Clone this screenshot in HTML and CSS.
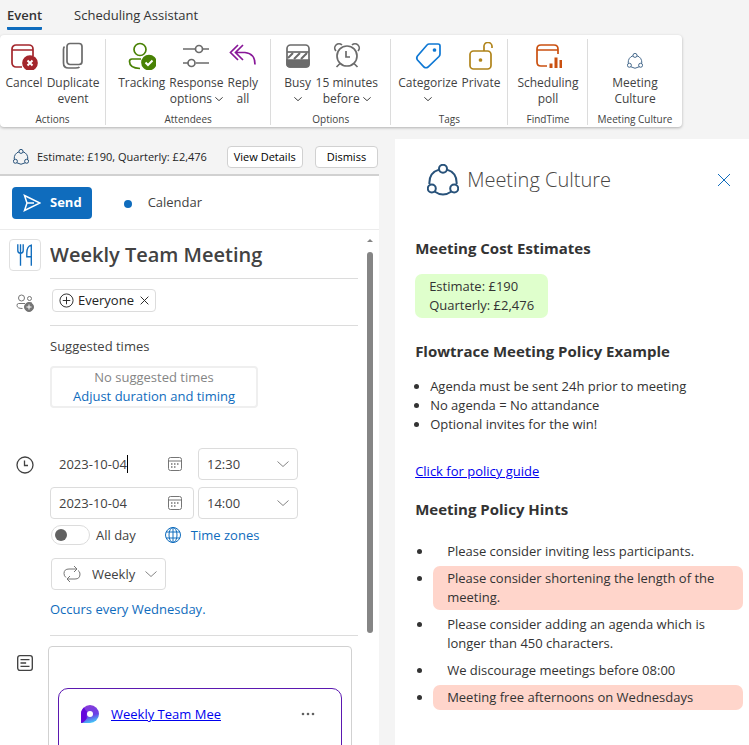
FILE: index.html
```html
<!DOCTYPE html>
<html lang="en">
<head>
  <meta charset="UTF-8">
  <title>Weekly Team Meeting</title>
  <meta name="viewport" content="width=device-width, initial-scale=1">
  <link rel="stylesheet" href="styles.css">
</head>
<body>
  <!-- shared icons -->
  <svg class="sprite" aria-hidden="true">
    <symbol id="culture" viewBox="0 0 32 32">
      <path d="M12 5.6C6 7.4 2 12.500 2.400 20M20 5.600C26 7.400 30 12.500 29.600 20M7.500 27.500Q16 33.500 24.500 27.500"/>
      <circle cx="16" cy="4.800" r="4"/>
      <circle cx="4.800" cy="24.500" r="4"/>
      <circle cx="27.200" cy="24.500" r="4"/>
    </symbol>
    <symbol id="chevron" viewBox="0 0 12 12"><path d="M.5 3.500l5.500 5 5.500-5"/></symbol>
    <symbol id="close" viewBox="0 0 14 14"><path d="M1 1l12 12M13 1L1 13"/></symbol>
    <symbol id="calendar" viewBox="0 0 16 16">
      <rect x="1.500" y="1.500" width="13" height="13" rx="2"/>
      <path d="M1.500 5h13"/>
      <path stroke-width="1.500" d="M7 8h1.500M10 8h1.500M4 8h1.500M4 11h1.500M7 11h1.500"/>
    </symbol>
  </svg>

  <nav class="tabs">
    <a class="tab active" href="#event">Event</a>
    <a class="tab" href="#scheduling">Scheduling Assistant</a>
  </nav>

  <div class="ribbon">
    <section class="group">
      <div class="tools">
        <button class="tool">
          <svg class="icon red" viewBox="0 0 28 28"><path d="M12 25H6a4 4 0 0 1-4-4V7a4 4 0 0 1 4-4h13a4 4 0 0 1 4 4v7M2 8h21"/><circle class="fill" cx="20" cy="21" r="7"/><path class="mark" d="M17.500 18.500l5 5M22.500 18.500l-5 5"/></svg>
          <span>Cancel</span>
        </button>
        <button class="tool">
          <svg class="icon grey" viewBox="0 0 28 28"><rect x="8" y="1.500" width="15" height="21" rx="3"/><path d="M5.500 4.500q-1 1-1 3V21q0 5 5 5h7q3 0 4-1"/></svg>
          <span>Duplicate<br>event</span>
        </button>
      </div>
      <h2 class="group-name">Actions</h2>
    </section>
    <section class="group">
      <div class="tools">
        <button class="tool">
          <svg class="icon green" viewBox="0 0 28 28"><circle cx="12" cy="7.500" r="6"/><path d="M13 17H4q-2.500 0-2.500 2.500Q1.500 26 12 26.500"/><circle class="fill" cx="21" cy="20.500" r="7"/><path class="mark" d="M17.500 20.500l2.500 2.500 4.500-4.500"/></svg>
          <span>Tracking</span>
        </button>
        <button class="tool">
          <svg class="icon grey" viewBox="0 0 28 28"><path d="M1 7h12M21 7h6M1 21h5M14 21h13"/><circle cx="17" cy="7" r="3.500"/><circle cx="9.500" cy="21" r="3.500"/></svg>
          <span>Response<br>options <svg class="arrow"><use href="#chevron"/></svg></span>
        </button>
        <button class="tool">
          <svg class="icon purple" viewBox="0 0 28 28"><path d="M9 3L1.500 10.500 9 18M14 3l-7.500 7.500L14 18M7 10.500h9q10 1 10 12"/></svg>
          <span>Reply<br>all</span>
        </button>
      </div>
      <h2 class="group-name">Attendees</h2>
    </section>
    <section class="group">
      <div class="tools">
        <button class="tool">
          <svg class="icon grey" viewBox="0 0 28 28"><path class="fill" d="M3 18h22v4q0 3-3 3H6q-3 0-3-3z"/><rect x="3" y="3" width="22" height="22" rx="3.500"/><path d="M3 10h22"/><path class="stripe" d="M4 16l5-5M10 17l6-6M17 17l6-6"/></svg>
          <span>Busy<br><svg class="arrow"><use href="#chevron"/></svg></span>
        </button>
        <button class="tool">
          <svg class="icon grey" viewBox="0 0 28 28"><circle cx="14" cy="14" r="10"/><path d="M13 9v6h4M7 21.500L3.500 25M21 21.500l3.500 3.500M3 9a4 4 0 1 1 6-6M25 9a4 4 0 1 0-6-6"/></svg>
          <span>15 minutes<br>before <svg class="arrow"><use href="#chevron"/></svg></span>
        </button>
      </div>
      <h2 class="group-name">Options</h2>
    </section>
    <section class="group">
      <div class="tools">
        <button class="tool">
          <svg class="icon blue" viewBox="0 0 28 28"><path d="M15 2h9q2 0 2 2v8q0 1.500-1 2.500L14 25q-2 1.500-4 0l-6.500-7q-1.500-2 0-4L13 3q1-1 2-1z"/><circle class="fill" cx="20.500" cy="8" r="1"/></svg>
          <span>Categorize<br><svg class="arrow"><use href="#chevron"/></svg></span>
        </button>
        <button class="tool">
          <svg class="icon gold" viewBox="0 0 28 28"><rect x="3" y="9" width="21" height="18" rx="3.500"/><path d="M17 9V5a4 4 0 0 1 8-1v2"/><circle class="fill" cx="13.500" cy="18" r="1"/></svg>
          <span>Private</span>
        </button>
      </div>
      <h2 class="group-name">Tags</h2>
    </section>
    <section class="group">
      <div class="tools">
        <button class="tool">
          <svg class="icon orange" viewBox="0 0 28 28"><path d="M13 24H7q-4 0-4-4V7q0-4 4-4h13q4 0 4 4v5M3 8h21"/><path class="bars" d="M17 21.500v4.500M22 15.500V26M27 18v8"/></svg>
          <span>Scheduling<br>poll</span>
        </button>
      </div>
      <h2 class="group-name">FindTime</h2>
    </section>
    <section class="group">
      <div class="tools">
        <button class="tool">
          <svg class="icon culture small"><use href="#culture"/></svg>
          <span>Meeting<br>Culture</span>
        </button>
      </div>
      <h2 class="group-name">Meeting Culture</h2>
    </section>
  </div>

  <main class="main">
    <div class="compose">
      <div class="notice">
        <svg class="culture notice-icon"><use href="#culture"/></svg>
        <span class="notice-text">Estimate: £190, Quarterly: £2,476</span>
        <button class="notice-btn">View Details</button>
        <button class="notice-btn">Dismiss</button>
      </div>

      <div class="send-bar">
        <button class="send">
          <svg viewBox="0 0 18 18"><path d="M1.500 1.500L17 9 1.500 16.500 4 9zM4 9h7"/></svg>
          Send
        </button>
        <span class="calendar-dot"></span>
        <span>Calendar</span>
      </div>

      <div class="scroll-area">
        <form class="form">
          <div class="row title-row">
            <button type="button" class="charm" aria-label="Charm">
              <svg viewBox="0 0 20 28"><path d="M2 2v7q0 3 3 3t3-3V2M5 2v24M17 26V3q-5 1-5 9v4h5"/></svg>
            </button>
            <input class="title" type="text" value="Weekly Team Meeting" aria-label="Title">
          </div>

          <div class="row people-row">
            <svg class="row-icon people" viewBox="0 0 18 18"><circle cx="5.500" cy="4" r="3"/><circle cx="13.500" cy="4.500" r="2"/><path d="M9 9.500H2.500Q1 9.500 1 11.500q0 3 5.500 3M12 9h4"/><circle class="fill" cx="13" cy="13" r="4.500"/><path class="mark" d="M10.500 13h5M13 10.500v5"/></svg>
            <div class="people-field">
              <span class="chip">
                <svg class="plus" viewBox="0 0 16 16"><circle cx="8" cy="8" r="7"/><path d="M8 4v8M4 8h8"/></svg>
                Everyone
                <button type="button" class="chip-close" aria-label="Remove Everyone"><svg><use href="#close"/></svg></button>
              </span>
            </div>
          </div>

          <div class="row">
            <div class="field suggested">
              <span>Suggested times</span>
              <div class="suggested-box">
                <span>No suggested times</span>
                <a href="#adjust">Adjust duration and timing</a>
              </div>
            </div>
          </div>

          <div class="row time-row">
            <svg class="row-icon clock" viewBox="0 0 18 18"><circle cx="9" cy="9" r="8"/><path d="M8.500 4.500V9.500H12"/></svg>
            <div class="field times">
              <label class="box date focused">
                <input type="text" value="2023-10-04" aria-label="Start date"><span class="caret"></span>
                <svg class="cal"><use href="#calendar"/></svg>
              </label>
              <label class="box time">
                <select aria-label="Start time"><option>12:30</option></select>
                <svg class="chev"><use href="#chevron"/></svg>
              </label>
              <label class="box date">
                <input type="text" value="2023-10-04" aria-label="End date">
                <svg class="cal"><use href="#calendar"/></svg>
              </label>
              <label class="box time">
                <select aria-label="End time"><option>14:00</option></select>
                <svg class="chev"><use href="#chevron"/></svg>
              </label>
            </div>
          </div>

          <div class="row">
            <div class="field all-day">
              <input class="toggle" type="checkbox" id="allday">
              <label for="allday">All day</label>
              <a class="zones" href="#zones">
                <svg viewBox="0 0 18 18"><circle cx="9" cy="9" r="7.500"/><ellipse cx="9" cy="9" rx="4" ry="7.500"/><path d="M2 6h14M2 12h14M9 1.500v15"/></svg>
                Time zones
              </a>
            </div>
          </div>

          <div class="row repeat-row">
            <div class="field">
              <label class="box repeat">
                <svg class="loop" viewBox="0 0 18 18"><path d="M3 12.500Q1 11 1 8.500 1 4 6 4h8M11 1l3 3-3 3M15 5.500q2 1 2 3.500 0 5-5 5H4M7 11l-3 3 3 3"/></svg>
                <select aria-label="Repeat"><option>Weekly</option></select>
                <svg class="chev"><use href="#chevron"/></svg>
              </label>
              <a class="occurs" href="#series">Occurs every Wednesday.</a>
            </div>
          </div>
          <hr class="divider">

          <div class="row">
            <svg class="row-icon note" viewBox="0 0 16 16"><rect x="1.500" y="1.500" width="13" height="13" rx="2"/><path d="M4 5h8M4 8h5M4 11h8"/></svg>
            <div class="editor">
              <div class="loop-card">
                <svg class="loop-logo" viewBox="0 0 18 18">
                  <defs>
                    <linearGradient id="loopfill" x1="0.300" y1="0" x2="0.600" y2="1">
                      <stop offset="0" stop-color="#8a3bd8"/>
                      <stop offset=".6" stop-color="#6a3fe6"/>
                      <stop offset="1" stop-color="#42d0f8"/>
                    </linearGradient>
                  </defs>
                  <path fill="url(#loopfill)" d="M0 18V9a9 9 0 1 1 9 9z"/>
                  <path fill="#6407dc" d="M0 18V9q0-4 3-6.500Q4 5 6 6.500 5 12 6 13 3 18 0 18z"/>
                  <circle fill="#fff" cx="9" cy="9" r="3"/>
                </svg>
                <a href="#component">Weekly Team Mee</a>
                <button type="button" class="more" aria-label="More options"><svg viewBox="0 0 14 4"><circle cx="2" cy="2" r="1.300"/><circle cx="7" cy="2" r="1.300"/><circle cx="12" cy="2" r="1.300"/></svg></button>
              </div>
            </div>
          </div>
        </form>
        <div class="scrollbar"><span class="scroll-up"></span><span class="thumb"></span></div>
      </div>
    </div>

    <aside class="pane">
      <header class="pane-head">
        <svg class="culture pane-logo"><use href="#culture"/></svg>
        <h1>Meeting Culture</h1>
        <button class="pane-close" aria-label="Close"><svg><use href="#close"/></svg></button>
      </header>

      <h2>Meeting Cost Estimates</h2>
      <p class="cost">Estimate: £190<br>Quarterly: £2,476</p>

      <h2>Flowtrace Meeting Policy Example</h2>
      <ul class="policy">
        <li>Agenda must be sent 24h prior to meeting</li>
        <li>No agenda = No attandance</li>
        <li>Optional invites for the win!</li>
      </ul>
      <a class="guide" href="#guide">Click for policy guide</a>

      <h2>Meeting Policy Hints</h2>
      <ul class="hints">
        <li>Please consider inviting less participants.</li>
        <li class="warn">Please consider shortening the length of the meeting.</li>
        <li>Please consider adding an agenda which is longer than 450 characters.</li>
        <li>We discourage meetings before 08:00</li>
        <li class="warn">Meeting free afternoons on Wednesdays</li>
      </ul>
    </aside>
  </main>
</body>
</html>
```

FILE: styles.css
```css
* {
  box-sizing: border-box;
}
body {
  display: flex;
  flex-direction: column;
  height: 100vh;
  margin: 0;
  overflow: hidden;
  background: #f4f4f4;
  color: #424242;
  font: 13px/19px "Open Sans", "Noto Sans", sans-serif;
}
button, input, select {
  font: inherit;
  color: inherit;
  margin: 0;
  padding: 0;
  border: 0;
  background: none;
}
button, select {
  cursor: pointer;
}
h1, h2, p, ul {
  margin: 0;
  padding: 0;
}
svg {
  display: block;
  flex: none;
  fill: none;
  stroke: currentColor;
}
a {
  color: #0f6cbd;
  text-decoration: none;
}
.sprite {
  position: absolute;
  width: 0;
  height: 0;
}
.culture {
  color: #28527a;
  stroke-width: 2;
}

/* tabs */
.tabs {
  display: flex;
  gap: 32px;
  padding: 6px 7px 5px;
}
.tab {
  height: 24px;
  color: #333;
}
.tab.active {
  font-weight: 600;
  border-bottom: 3px solid #0f6cbd;
  border-radius: 1px;
}

/* ribbon */
.ribbon {
  display: grid;
  grid-template-columns: 106fr 165fr 120fr 117fr 80fr 93fr;
  width: 91%;
  margin-bottom: 12px;
  padding: 4px 0 1px;
  background: #fff;
  border-radius: 4px;
  box-shadow: 0 1px 3px rgba(0, 0, 0, .28);
}
.group {
  display: flex;
  flex-direction: column;
  min-width: 0;
  margin-bottom: 1px;
  border-right: 1px solid #dcdcdc;
}
.group:last-child {
  border-right: 0;
}
.tools {
  display: flex;
  justify-content: center;
  gap: 4px;
  height: 74px;
}
.tool {
  display: flex;
  flex-direction: column;
  align-items: center;
  gap: 5px;
  padding-top: 3px;
  font-size: 12px;
  line-height: 16px;
  white-space: nowrap;
}
.icon {
  width: 28px;
  height: 28px;
  stroke-width: 1.700;
}
.icon.small {
  padding: 11px 6px 1px;
}
.icon .fill {
  fill: currentColor;
}
.icon .mark {
  stroke: #fff;
  stroke-width: 2;
}
.icon .stripe {
  stroke-width: 2;
}
.icon .bars {
  stroke-width: 3;
}
.red { color: #a4262c; }
.grey { color: #6b6b6b; }
.green { color: #498205; }
.purple { color: #881798; }
.blue { color: #0f78d4; }
.gold { color: #b0841a; }
.orange { color: #ca5010; }
.arrow {
  display: inline-block;
  width: 8px;
  height: 8px;
  stroke-width: 1.500;
}
.group-name {
  font-size: 10px;
  font-weight: 400;
  line-height: 12px;
  text-align: center;
  white-space: nowrap;
}

/* columns */
.main {
  display: grid;
  grid-template-columns: 15fr 14fr;
  gap: 16px;
  flex: 1;
  min-height: 0;
}
.compose {
  display: flex;
  flex-direction: column;
  min-width: 0;
  min-height: 0;
  background: #fff;
}

.notice {
  display: flex;
  align-items: center;
  height: 37px;
  padding: 0 1px 0 13px;
  background: #f4f4f4;
  border-bottom: 2px solid #d1d1d1;
  color: #242424;
  font-size: 11px;
}
.notice-icon {
  width: 16px;
  height: 16px;
}
.notice-text {
  flex: 1;
  margin-left: 8px;
  white-space: nowrap;
}
.notice-btn {
  height: 22px;
  margin-left: 12px;
  padding: 0 6px;
  border: 1px solid #d1d1d1;
  border-radius: 4px;
  background: #fff;
  color: #000;
  line-height: 20px;
  white-space: nowrap;
}
.notice-btn:last-child {
  padding: 0 11px;
}

.send-bar {
  display: flex;
  align-items: center;
  height: 54px;
  padding: 0 12px;
  border-bottom: 1px solid #ececec;
}
.send {
  display: flex;
  align-items: center;
  gap: 9px;
  height: 32px;
  padding: 0 10px 0 11px;
  border-radius: 4px;
  background: #0f6cbd;
  color: #fff;
  font-weight: 700;
}
.send svg {
  width: 18px;
  height: 18px;
  stroke-width: 1.500;
}
.calendar-dot {
  width: 8px;
  height: 8px;
  margin: 2px 16px 0 32px;
  border-radius: 50%;
  background: #0f6cbd;
}

/* event form */
.scroll-area {
  display: flex;
  flex: 1;
  min-height: 0;
  padding-right: 6px;
}
.form {
  flex: 1;
  min-width: 0;
  padding-right: 8px;
  overflow: hidden;
}
.scrollbar {
  display: flex;
  flex-direction: column;
  align-items: center;
  width: 7px;
}
.scroll-up {
  margin: 9px 0 10px;
  border: 3px solid transparent;
  border-top: 0;
  border-bottom-color: #858585;
}
.thumb {
  width: 6px;
  height: 74%;
  border-radius: 3px;
  background: #858585;
}
.row {
  display: flex;
}
.row > .field:first-child {
  margin-left: 50px;
}
.row-icon {
  width: 18px;
  height: 18px;
  margin: 0 16px;
}
.title-row {
  align-items: center;
  height: 49px;
  padding-left: 9px;
}
.charm {
  display: flex;
  align-items: center;
  justify-content: center;
  width: 32px;
  height: 32px;
  border: 1px solid #e0e0e0;
  border-radius: 4px;
  color: #0f6cbd;
}
.charm svg {
  width: 18px;
  height: 26px;
  stroke-width: 1.500;
}
.title {
  flex: 1;
  align-self: stretch;
  min-width: 0;
  margin-left: 9px;
  border-bottom: 1px solid #dcdcdc;
  font-size: 20px;
  font-weight: 600;
}
.people-row {
  align-items: center;
  height: 47px;
}
.people {
  color: #757575;
}
.people .fill {
  fill: currentColor;
}
.people .mark {
  stroke: #fff;
}
.people-field {
  display: flex;
  align-items: center;
  align-self: stretch;
  flex: 1;
  padding: 0 2px 3px;
  border-bottom: 1px solid #dcdcdc;
}
.chip {
  display: flex;
  align-items: center;
  gap: 4px;
  height: 23px;
  padding: 0 6px;
  border: 1px solid #dcdcdc;
  border-radius: 4px;
  color: #242424;
}
.plus {
  width: 15px;
  height: 15px;
}
.chip-close svg {
  width: 9px;
  height: 9px;
  margin-left: 2px;
  stroke-width: 1.500;
}
.suggested {
  padding-top: 11px;
}
.suggested-box {
  display: flex;
  flex-direction: column;
  align-items: center;
  margin-top: 10px;
  padding: 0 21px;
  border: 2px solid #efefef;
  border-radius: 4px;
  color: #858585;
}
.time-row {
  padding-top: 40px;
}
.clock {
  align-self: flex-start;
  margin-top: 8px;
  stroke-width: 1.300;
}
.times {
  display: grid;
  grid-template-columns: 144px 100px;
  gap: 7px 4px;
}
.box {
  display: flex;
  align-items: center;
  height: 32px;
  border: 1px solid #dcdcdc;
  border-radius: 4px;
}
.box input, .box select {
  flex: 1;
  min-width: 0;
  appearance: none;
  outline: 0;
}
.date {
  padding: 0 10px 0 8px;
}
.focused {
  border-color: transparent;
}
.focused input {
  flex: none;
  field-sizing: content;
}
.caret {
  width: 1px;
  height: 18px;
  margin-right: auto;
  background: #000;
}
.cal {
  width: 16px;
  height: 16px;
  color: #757575;
}
.time {
  padding: 0 8px;
}
.chev {
  width: 12px;
  height: 12px;
  color: #858585;
}
.all-day {
  display: flex;
  align-items: center;
  height: 20px;
  margin-top: 6px;
  padding-left: 1px;
}
.toggle {
  display: flex;
  align-items: center;
  width: 39px;
  height: 20px;
  margin-right: 6px;
  padding: 0 3px;
  appearance: none;
  border: 1px solid #dcdcdc;
  border-radius: 10px;
}
.toggle::before {
  content: "";
  width: 12px;
  height: 12px;
  border-radius: 50%;
  background: #616161;
}
.zones {
  display: flex;
  align-items: center;
  gap: 9px;
  margin-left: 28px;
}
.zones svg {
  width: 18px;
  height: 18px;
}
.repeat-row {
  padding-top: 13px;
}
.repeat {
  gap: 11px;
  width: 115px;
  margin-left: 1px;
  padding: 0 8px 0 11px;
}
.repeat .chev {
  margin-left: -8px;
}
.loop {
  width: 18px;
  height: 18px;
  color: #757575;
}
.occurs {
  display: block;
  margin-top: 10px;
}
.divider {
  margin: 16px 0 0 50px;
  border: 0;
  border-top: 1px solid #dcdcdc;
}
.note {
  margin: 18px 14px 0 16px;
  stroke-width: 1.200;
}
.editor {
  flex: 1;
  min-height: 130px;
  margin: 10px 6px 0 0;
  padding: 41px 9px 0;
  border: 1px solid #d1d1d1;
  border-radius: 4px;
}
.loop-card {
  display: flex;
  align-items: flex-start;
  height: 100px;
  padding: 16px 26px 0 22px;
  border: 1px solid #5b18b0;
  border-radius: 10px;
}
.loop-logo {
  width: 18px;
  height: 18px;
  stroke: none;
}
.loop-card a {
  margin: 0 auto 0 12px;
  color: #0000ee;
  text-decoration: underline;
}
.more svg {
  width: 14px;
  height: 4px;
  margin-top: 7px;
  fill: #616161;
  stroke: none;
}

/* add-in pane */
.pane {
  min-width: 0;
  padding: 24px 6px 0 20px;
  background: #fff;
  color: #333;
  overflow: hidden;
}
.pane-head {
  display: flex;
  align-items: center;
  height: 33px;
  padding: 0 12px;
}
.pane-logo {
  width: 32px;
  height: 32px;
}
.pane-head h1 {
  flex: 1;
  margin-left: 8px;
  color: #484644;
  font-size: 20px;
  font-weight: 300;
}
.pane-close svg {
  width: 14px;
  height: 14px;
  color: #0f6cbd;
}
.pane h2 {
  font-size: 15px;
  font-weight: 700;
  line-height: 20px;
}
.pane-head + h2 {
  margin-top: 42px;
}
.cost {
  width: fit-content;
  margin: 16px 0 23px;
  padding: 3px 14px;
  border-radius: 7px;
  background: #dfffcc;
}
.policy {
  margin: 16px 0 28px;
  padding-left: 15px;
}
.guide {
  display: block;
  margin-bottom: 18px;
  color: #0000ee;
  text-decoration: underline;
}
.hints {
  display: grid;
  gap: 2px;
  margin-top: 20px;
  padding-left: 18px;
}
.hints li {
  padding: 3px 14px;
  border-radius: 7px;
}
.hints .warn {
  background: #ffd5cb;
}
```
